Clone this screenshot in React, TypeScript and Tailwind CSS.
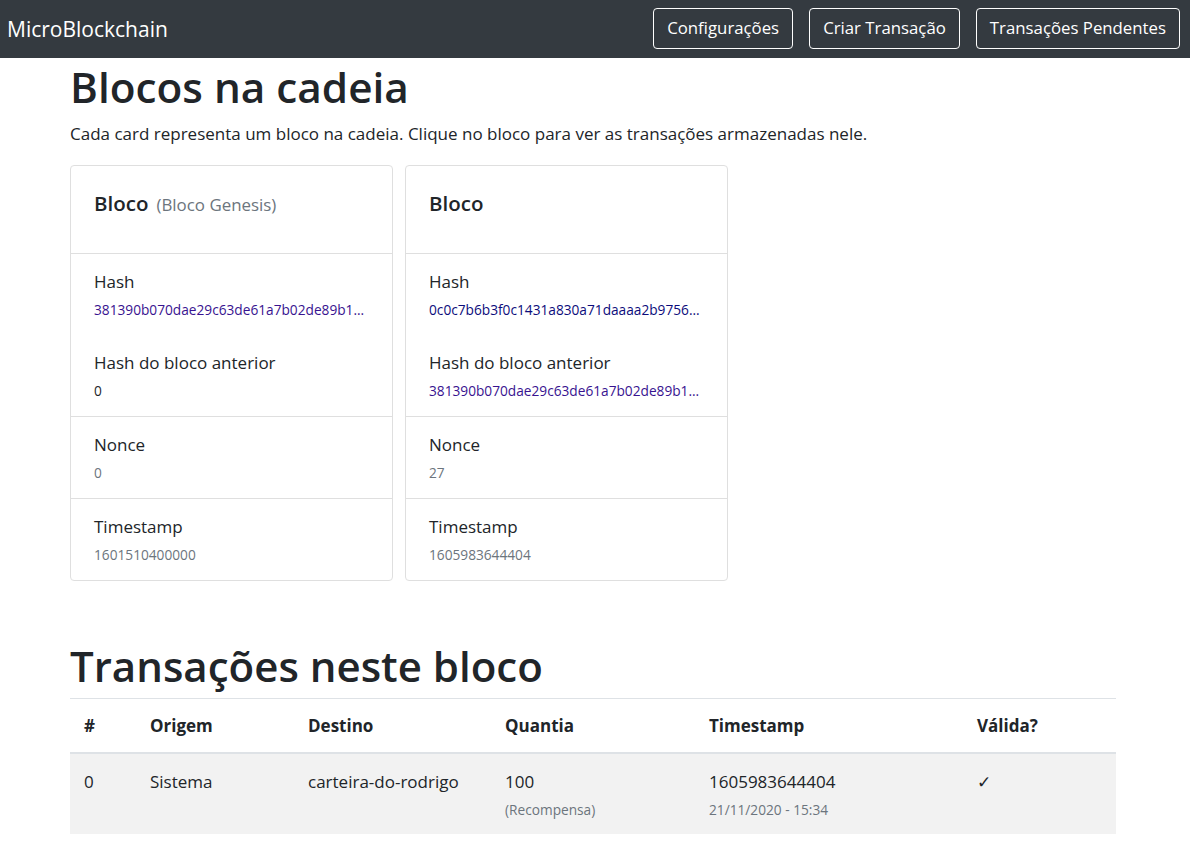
import React from "react";

const font = { fontFamily: '"Open Sans", "Noto Sans", sans-serif' };

function Section({ items }: { items: { label: string; value: string; color?: string }[] }) {
  return (
    <div className="border-b border-[#dfdfdf] last:border-b-0 px-[23px] pt-[16px] pb-[15px]">
      {items.map((it, i) => (
        <div key={i} className={i > 0 ? "mt-[31px]" : ""}>
          <div className="text-[17px] leading-[24px] text-[#212529]">{it.label}</div>
          <div
            className="mt-[6px] text-[13.7px] leading-[20px] whitespace-nowrap overflow-hidden"
            style={{ color: it.color ?? "#6c757d" }}
          >
            {it.value}
          </div>
        </div>
      ))}
    </div>
  );
}

const visible: Record<string, number> = { "381390": 33, "0c0c7b": 34 };

function short(h: string) {
  const n = visible[h.slice(0, 6)] ?? 33;
  return h.length > n ? h.slice(0, n) + "..." : h;
}

function Card({
  subtitle,
  hash,
  prev,
  nonce,
  ts,
}: {
  subtitle?: string;
  hash: string;
  prev: string;
  nonce: string;
  ts: string;
}) {
  const hashColor = "#" + hash.slice(0, 6);
  const prevColor = prev.length >= 6 ? "#" + prev.slice(0, 6) : "#212529";
  return (
    <div className="w-[323px] border border-[#dfdfdf] rounded-[4px] bg-white">
      <div className="border-b border-[#dfdfdf] px-[23px] pt-[24px] pb-[35px]">
        <div className="leading-[26px] whitespace-nowrap">
          <span className="text-[20.5px] font-semibold text-[#212529]">Bloco</span>
          {subtitle && (
            <span className="text-[16.9px] text-[#6c757d] ml-[8px]">{subtitle}</span>
          )}
        </div>
      </div>
      <Section
        items={[
          { label: "Hash", value: short(hash), color: hashColor },
          { label: "Hash do bloco anterior", value: short(prev), color: prevColor },
        ]}
      />
      <Section items={[{ label: "Nonce", value: nonce }]} />
      <Section items={[{ label: "Timestamp", value: ts }]} />
    </div>
  );
}

export default function App() {
  const td = "pl-[14px] pr-[12px] pt-[15px] pb-[14px] leading-[26px]";
  const sub = "text-[13.7px] leading-[21px] text-[#6c757d] mt-[4px]";
  return (
    <div className="min-h-[848px] bg-white text-[#212529]" style={font}>
      <nav className="h-[58px] bg-[#343a40] flex items-center justify-between pl-[7px] pr-[10px]">
        <span className="text-[21px] text-white leading-[30px]">MicroBlockchain</span>
        <div className="flex gap-[16px] -mt-[2px]">
          {["Configurações", "Criar Transação", "Transações Pendentes"].map((t) => (
            <button
              key={t}
              className="h-[41px] px-[13px] border border-white rounded-[4px] text-white text-[16.8px] leading-[24px]"
            >
              {t}
            </button>
          ))}
        </div>
      </nav>

      <main className="ml-[70px] w-[1046px]">
        <h1 className="text-[42.3px] font-semibold leading-[53px] mt-[2px] mb-[8px] text-[#212529]">
          Blocos na cadeia
        </h1>
        <p className="text-[17px] leading-[26px] mb-[18px]">
          Cada card representa um bloco na cadeia. Clique no bloco para ver as transações armazenadas nele.
        </p>

        <div className="flex gap-[12px]">
          <Card
            subtitle="(Bloco Genesis)"
            hash="381390b070dae29c63de61a7b02de89b1f0c3a5e7d2b9c4e1a8f6d3b2c7e9a05"
            prev="0"
            nonce="0"
            ts="1601510400000"
          />
          <Card
            hash="0c0c7b6b3f0c1431a830a71daaaa2b9756e3d1c8a4f2b7e9d0c5a6b1f3e8d2c47"
            prev="381390b070dae29c63de61a7b02de89b1f0c3a5e7d2b9c4e1a8f6d3b2c7e9a05"
            nonce="27"
            ts="1605983644404"
          />
        </div>

        <h1 className="text-[42px] font-semibold leading-[53px] mt-[58px] mb-[6px] text-[#212529]">
          Transações neste bloco
        </h1>

        <table className="w-full table-fixed border-collapse text-[17px]">
          <colgroup>
            <col className="w-[66px]" />
            <col className="w-[158px]" />
            <col className="w-[197px]" />
            <col className="w-[204px]" />
            <col className="w-[268px]" />
            <col />
          </colgroup>
          <thead>
            <tr className="border-t border-[#dee2e6]">
              {["#", "Origem", "Destino", "Quantia", "Timestamp", "Válida?"].map((h) => (
                <th
                  key={h}
                  className="text-left font-bold pl-[14px] pr-[12px] pt-[14px] pb-[13px] leading-[26px] border-b-2 border-[#dee2e6]"
                >
                  {h}
                </th>
              ))}
            </tr>
          </thead>
          <tbody>
            <tr className="bg-[#f2f2f2] align-top">
              <td className={td}>0</td>
              <td className={td}>Sistema</td>
              <td className={td}>carteira-do-rodrigo</td>
              <td className={td}>
                100
                <div className={sub}>(Recompensa)</div>
              </td>
              <td className={td}>
                1605983644404
                <div className={sub}>21/11/2020 - 15:34</div>
              </td>
              <td className={td}>✓</td>
            </tr>
          </tbody>
        </table>
      </main>
    </div>
  );
}
